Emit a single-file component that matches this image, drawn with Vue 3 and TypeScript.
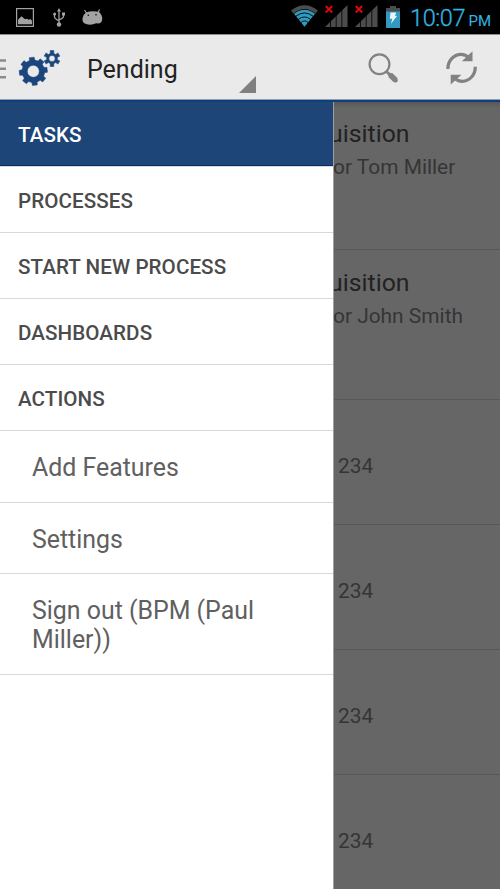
<script setup lang="ts">
interface MenuItem {
  label: string
  kind: 'active' | 'section' | 'action'
  height: number
}

interface TaskRow {
  title?: string
  detail: string
  height: number
}

const menu: MenuItem[] = [
  { label: 'TASKS', kind: 'active', height: 65 },
  { label: 'PROCESSES', kind: 'section', height: 66 },
  { label: 'START NEW PROCESS', kind: 'section', height: 66 },
  { label: 'DASHBOARDS', kind: 'section', height: 66 },
  { label: 'ACTIONS', kind: 'section', height: 66 },
  { label: 'Add Features', kind: 'action', height: 72 },
  { label: 'Settings', kind: 'action', height: 71 },
  { label: 'Sign out (BPM (Paul Miller))', kind: 'action', height: 101 },
]

const tasks: TaskRow[] = [
  { title: 'uisition', detail: 'or Tom Miller', height: 148 },
  { title: 'uisition', detail: 'or John Smith', height: 150 },
  { detail: '234', height: 125 },
  { detail: '234', height: 125 },
  { detail: '234', height: 125 },
  { detail: '234', height: 125 },
]

/** Outline of a cog wheel with a round hole in the middle. */
function gear(cx: number, cy: number, outer: number, inner: number, hole: number, teeth: number, turn: number): string {
  const step = (Math.PI * 2) / teeth
  const pts: string[] = []
  for (let i = 0; i < teeth; i++) {
    const a = turn + i * step
    const corners: [number, number][] = [
      [inner, -0.3],
      [outer, -0.22],
      [outer, 0.22],
      [inner, 0.3],
    ]
    for (const [r, f] of corners) {
      pts.push(`${(cx + r * Math.cos(a + f * step)).toFixed(2)} ${(cy + r * Math.sin(a + f * step)).toFixed(2)}`)
    }
  }
  return `M${pts.join('L')}ZM${cx - hole} ${cy}a${hole} ${hole} 0 1 0 ${hole * 2} 0a${hole} ${hole} 0 1 0 ${-hole * 2} 0Z`
}

const bigGear = gear(15.3, 22.3, 14.2, 11.4, 6, 8, -1.68)
const smallGear = gear(34, 9.5, 8.2, 5.5, 3.1, 6, -1.57)
</script>

<template>
  <div class="screen">
    <div class="status">
      <div class="notes">
        <svg class="picture" width="18" height="19" viewBox="0 0 18 19">
          <rect x=".6" y=".6" width="16.8" height="17.8" fill="none" stroke="#a3a3a3" stroke-width="1.2" />
          <path d="M2 16.300v-4.500l3.500-3.500 3.500 3 1.500-.5 2.500 1 1.500-.7 1.500 1.700v3.500z" fill="#a3a3a3" />
        </svg>
        <svg class="usb" width="12" height="19" viewBox="0 0 12 19">
          <path d="M6 3v13M1.500 6v3q0 1.500 4.500 4M10.500 6v2.500q0 1.500-4.500 3.500" fill="none" stroke="#a3a3a3" stroke-width="1.300" />
          <path d="M6 0l2 3.500H4z" fill="#a3a3a3" />
          <circle cx="6" cy="16.500" r="2.200" fill="#a3a3a3" />
          <circle cx="1.600" cy="6" r="1.500" fill="#a3a3a3" />
          <rect x="9" y="4.500" width="3" height="3" fill="#a3a3a3" />
        </svg>
        <svg class="droid" width="21" height="17" viewBox="0 0 21 17">
          <path d="M2.500 1l2 3M17.500.5l-1.500 3" stroke="#a3a3a3" stroke-width="1.200" />
          <path d="M4 3.500Q10 1.500 17 3q3.500 3 3.200 7.500-.5 4-4.200 4-2-.8-4 .5-4 1.500-8 0Q.2 14 .5 9.500 1 5.500 4 3.500z" fill="#a3a3a3" />
          <circle cx="6.300" cy="6.300" r=".8" /><circle cx="14" cy="5.700" r=".8" />
        </svg>
      </div>
      <div class="system">
        <svg width="27" height="22" viewBox="0 0 27 22">
          <path d="M0 5.500Q13.500-5 27 5.500L24.500 8.500Q13.500-.5 2.500 8.500z" fill="#4c4c4c" />
          <path d="M3 8.800Q13.500.6 24 8.800L13.500 21.800z" fill="#3399bf" />
          <path d="M4.500 11.500Q13.500 4.400 22.500 11.500M7.200 14.500Q13.500 9.400 19.800 14.500M9.800 17.600Q13.500 14.200 17.200 17.600" fill="none" stroke="#02131a" stroke-width="1" />
        </svg>
        <svg v-for="n in 2" :key="n" class="signal" width="23" height="23" viewBox="0 0 23 23">
          <path d="M0 22L22.500 0v22z" fill="#4c4c4c" />
          <path d="M5.500 15v7M11.200 9v13M16.800 3v19" stroke="#000" stroke-width=".8" />
          <path d="M.7 1l6.500 6.500M7.200 1L.7 7.500" stroke="#e00808" stroke-width="1.900" />
        </svg>
        <svg class="battery" width="14" height="22" viewBox="0 0 14 22">
          <path d="M4 0h6v2h4v3.500H0V2h4z" fill="#4c4c4c" />
          <path d="M0 5.300h14V22H0z" fill="#3399bf" />
          <path d="M4.500 6.500h5.700L9 9.800l2 .2L5 17.800l1.300-5H3.800z" fill="#e8f6fa" />
        </svg>
        <div class="clock"><span class="time">10:07</span><span class="half">PM</span></div>
      </div>
    </div>

    <header class="bar">
      <svg class="handle" width="6" height="20" viewBox="0 0 6 20">
        <path d="M0 1.500h6M0 9.800h6M0 18.300h6" stroke="#8b8b8b" stroke-width="2.600" />
      </svg>
      <svg class="gears" width="43" height="38" viewBox="0 0 43 38">
        <g fill="#1b457d" fill-rule="evenodd" stroke="#1b457d" stroke-width=".5" stroke-linejoin="round">
          <path :d="bigGear" />
          <path :d="smallGear" />
        </g>
      </svg>
      <div class="spinner">
        <span class="heading">Pending</span>
        <svg class="corner" width="17" height="17" viewBox="0 0 17 17"><path d="M0 17L17 0v17z" fill="#808080" /></svg>
      </div>
      <svg class="search" width="32" height="32" viewBox="0 0 32 32">
        <circle cx="11.500" cy="11.300" r="9.900" fill="none" stroke="#828282" stroke-width="2.200" />
        <path d="M18.500 18.500l4 4" stroke="#828282" stroke-width="2.600" />
        <path d="M22.300 22.100l5.400 5.200" stroke="#828282" stroke-width="5.600" />
        <path d="M22.300 22.100l5.400 5.200" stroke="#828282" stroke-width="4.400" stroke-linecap="round" />
      </svg>
      <svg class="refresh" width="32" height="34" viewBox="0 0 32 34">
        <g fill="none" stroke="#828282" stroke-width="3.200">
          <path d="M1.900 18C1.700 10 7.700 3.300 15 3.300q4.500 0 8 3.500" />
          <path d="M29.300 15.800c.2 8-5.800 14.500-13 14.500q-4.500 0-8-3.500" />
        </g>
        <path d="M26.500.2V10.300H15.800zM4.700 33.500V23.800H15.500z" fill="#828282" />
      </svg>
    </header>

    <main class="body">
      <nav class="drawer">
        <div v-for="item in menu" :key="item.label" class="item" :class="item.kind" :style="{ height: item.height + 'px' }">
          <span>{{ item.label }}</span>
        </div>
      </nav>
      <section class="tasks">
        <div v-for="(task, i) in tasks" :key="i" class="task" :class="{ short: !task.title }" :style="{ height: task.height + 'px' }">
          <div v-if="task.title" class="title">{{ task.title }}</div>
          <div class="detail">{{ task.detail }}</div>
        </div>
      </section>
    </main>
  </div>
</template>

<style>
body {
  margin: 0;
  overflow: hidden;
}
</style>

<style scoped>
.screen {
  width: 500px;
  height: 889px;
  display: flex;
  flex-direction: column;
  overflow: hidden;
  font-family: Roboto, "Liberation Sans", sans-serif;
}
svg {
  display: block;
  flex: none;
}
.status {
  height: 34px;
  flex: none;
  display: flex;
  justify-content: space-between;
  background: #000;
}
.notes {
  display: flex;
  align-items: flex-start;
  padding: 8px 0 0 16px;
}
.usb {
  margin-left: 19px;
}
.droid {
  margin: 1px 0 0 17px;
}
.system {
  display: flex;
  align-items: flex-start;
  padding: 5px 9px 0 0;
}
.signal {
  margin-left: 7px;
}
.battery {
  margin: 1px 0 0 8px;
}
.clock {
  width: 81px;
  margin-left: 10px;
  display: flex;
  align-items: baseline;
  justify-content: space-between;
  color: #33b5e5;
  line-height: 26px;
}
.time {
  font-size: 23.5px;
  font-weight: 300;
  letter-spacing: -.4px;
  -webkit-text-stroke: .3px #33b5e5;
}
.half {
  font-size: 15px;
}
.bar {
  box-sizing: border-box;
  height: 68px;
  flex: none;
  display: flex;
  align-items: flex-start;
  background: #eaeaea;
  border-top: 1px solid #918c8c;
  border-bottom: 2px solid #0e3f7d;
  box-shadow: inset 0 -1px #939db0;
}
.handle {
  margin-top: 24px;
}
.gears {
  margin: 14px 0 0 12px;
}
.spinner {
  width: 169px;
  height: 65px;
  margin-left: 26px;
  display: flex;
  align-items: flex-start;
  justify-content: space-between;
}
.heading {
  margin-top: 20px;
  font-size: 25px;
  line-height: 30px;
  color: #222;
}
.corner {
  margin-top: 41px;
}
.search {
  margin: 18px 0 0 112px;
}
.refresh {
  margin: 16px 0 0 46px;
}
.body {
  flex: 1;
  min-height: 0;
  display: flex;
  background: #666;
}
.drawer {
  width: 333px;
  flex: none;
  background: #fff;
  border-right: 1px solid #a0a0a0;
}
.item {
  box-sizing: border-box;
  display: flex;
  align-items: center;
  border-bottom: 1px solid #d9d9d9;
}
.active,
.section {
  padding: 2px 0 0 18px;
  font-size: 20.6px;
  font-weight: 500;
  letter-spacing: .07px;
  color: #4b4b4b;
}
.active {
  color: #fff;
  background: linear-gradient(#204672, #1e4578 12px);
  box-shadow: inset 0 -1px #0a2c60;
}
.action {
  padding: 2px 50px 0 32px;
  font-size: 24.9px;
  line-height: 29px;
  color: #606060;
}
.tasks {
  flex: 1;
  min-width: 0;
  overflow: hidden;
  background: linear-gradient(#585858, #666 6px);
}
.task {
  box-sizing: border-box;
  border-bottom: 1px solid #585858;
  padding-top: 17px;
  white-space: nowrap;
}
.task + .task {
  padding-top: 18px;
}
.title {
  margin-left: -5px;
  font-size: 24.8px;
  line-height: 30px;
  color: #222;
}
.detail {
  margin: 5px 0 0 -1px;
  font-size: 20.9px;
  line-height: 26px;
  color: #353535;
}
.short .detail {
  margin: 35px 0 0 4px;
}
</style>
